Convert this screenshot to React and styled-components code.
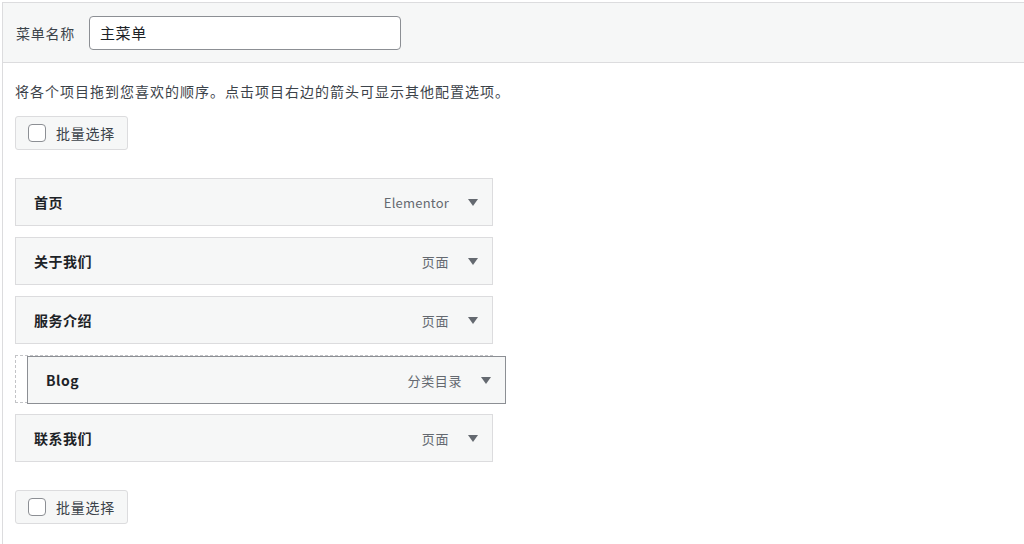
import React from 'react';
import styled, { createGlobalStyle } from 'styled-components';

const GlobalStyle = createGlobalStyle`
    html, body {
        margin: 0;
        padding: 0;
        background: #fff;
    }
    body {
        font-family: "Noto Sans CJK SC", "Liberation Sans", sans-serif;
        color: #1d2327;
    }
`;

const Panel = styled.div`
    margin: 2px 0 0 2px;
    border-top: 1px solid #dcdcde;
    border-left: 1px solid #dcdcde;
    height: 542px;
    box-sizing: border-box;
`;

const Header = styled.div`
    background: #f6f7f7;
    border-bottom: 1px solid #dcdcde;
    height: 60px;
    box-sizing: border-box;
    display: flex;
    align-items: center;
    padding-left: 13px;
    gap: 14px;
`;

const Label = styled.label`
    font-size: 14px;
    letter-spacing: 0.75px;
    color: #3c434a;
`;

const NameInput = styled.input`
    width: 312px;
    height: 34px;
    box-sizing: border-box;
    border: 1px solid #8c8f94;
    border-radius: 4px;
    padding: 0 10px;
    font-family: inherit;
    font-size: 15px;
    letter-spacing: 0.6px;
    color: #1d2327;
    background: #fff;
    outline: none;
`;

const Body = styled.div`
    padding: 19px 0 0 12px;
`;

const Hint = styled.p`
    margin: 0;
    font-size: 14px;
    letter-spacing: 1px;
    line-height: 19px;
    color: #3c434a;
`;

const BulkButton = styled.label`
    display: inline-flex;
    align-items: center;
    gap: 10px;
    height: 34px;
    box-sizing: border-box;
    padding: 0 12px;
    margin-top: ${({ top }) => top}px;
    background: #f6f7f7;
    border: 1px solid #dcdcde;
    border-radius: 3px;
    font-size: 14px;
    letter-spacing: 0.75px;
    color: #3c434a;
`;

const Box = styled.span`
    width: 16px;
    height: 16px;
    border: 1px solid #8c8f94;
    border-radius: 4px;
    background: #fff;
`;

const List = styled.ul`
    list-style: none;
    margin: 28px 0 0;
    padding: 0;
    display: flex;
    flex-direction: column;
    gap: 11px;
    width: 478px;
`;

const Slot = styled.li`
    position: relative;
    height: 48px;
    box-sizing: border-box;
    border: 1px ${({ placeholder }) => (placeholder ? 'dashed #c3c4c7' : 'solid #dcdcde')};
    background: ${({ placeholder }) => (placeholder ? '#fff' : '#f6f7f7')};
    display: flex;
    align-items: center;
    padding: 0 14px 0 18px;
`;

const Dragged = styled.div`
    position: absolute;
    left: 11px;
    top: 0;
    width: 479px;
    height: 48px;
    box-sizing: border-box;
    border: 1px solid #8c8f94;
    background: #f6f7f7;
    display: flex;
    align-items: center;
    padding: 0 14px 0 18px;
`;

const Title = styled.span`
    flex: 1;
    font-size: 14px;
    letter-spacing: 0.5px;
    font-weight: 700;
    color: #1d2327;
`;

const Type = styled.span`
    font-size: 13px;
    letter-spacing: ${({ latin }) => (latin ? '0.2px' : '0.6px')};
    color: #646970;
    margin-right: 19px;
`;

const Arrow = styled.span`
    width: 0;
    height: 0;
    border-left: 5px solid transparent;
    border-right: 5px solid transparent;
    border-top: 7px solid #646970;
`;

const items = [
    { title: '首页', type: 'Elementor' },
    { title: '关于我们', type: '页面' },
    { title: '服务介绍', type: '页面' },
    { title: 'Blog', type: '分类目录', dragging: true },
    { title: '联系我们', type: '页面' },
];

function ItemRow({ title, type }) {
    return (
        <>
            <Title>{title}</Title>
            <Type latin={/^[A-Za-z]/.test(type)}>{type}</Type>
            <Arrow />
        </>
    );
}

export default function App() {
    return (
        <>
            <GlobalStyle />
            <Panel>
                <Header>
                    <Label>菜单名称</Label>
                    <NameInput defaultValue="主菜单" />
                </Header>
                <Body>
                    <Hint>将各个项目拖到您喜欢的顺序。点击项目右边的箭头可显示其他配置选项。</Hint>
                    <BulkButton top={15}>
                        <Box />
                        批量选择
                    </BulkButton>
                    <List>
                        {items.map((item) =>
                            item.dragging ? (
                                <Slot key={item.title} placeholder>
                                    <Dragged>
                                        <ItemRow {...item} />
                                    </Dragged>
                                </Slot>
                            ) : (
                                <Slot key={item.title}>
                                    <ItemRow {...item} />
                                </Slot>
                            )
                        )}
                    </List>
                    <BulkButton top={28}>
                        <Box />
                        批量选择
                    </BulkButton>
                </Body>
            </Panel>
        </>
    );
}
